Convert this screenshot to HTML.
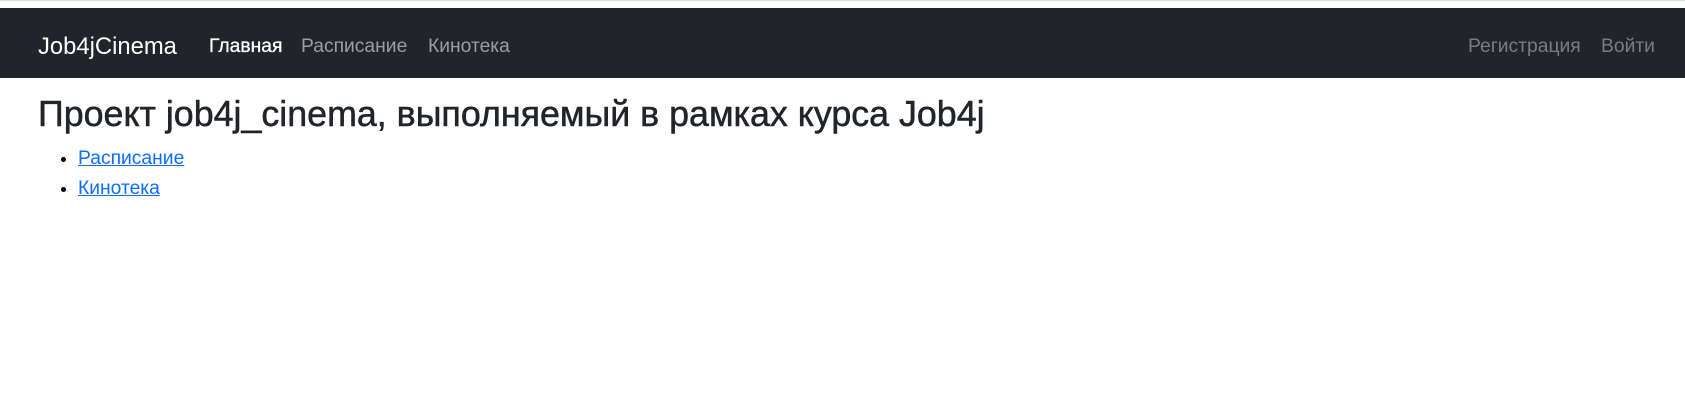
<!DOCTYPE html>
<html><head><meta charset="utf-8"><style>
body{margin:0;background:#fff;font-family:"Liberation Sans",sans-serif;width:1685px;height:413px;overflow:hidden}
.top{height:8px;background:#fff;border-top:1px solid #ddd;box-sizing:border-box}
nav{position:absolute;top:8px;left:0;width:1685px;height:70px;background:#212529}
nav span{position:absolute;top:26px;font-size:19.3px;line-height:26px;white-space:nowrap}
.brand{left:38px;color:#fff;font-size:23.8px!important;top:24px!important;line-height:30px!important}
.g{color:rgba(255,255,255,.55)}
.d{color:rgba(255,255,255,.4)}
h1{position:absolute;left:38px;top:92px;margin:0;font-size:35.8px;font-weight:normal;-webkit-text-stroke:0.5px #212529;color:#212529;line-height:44px;white-space:nowrap}
ul{position:absolute;left:38px;top:144px;margin:0;padding-left:40px;font-size:19.3px;line-height:30px}
a{color:#0d6efd}
</style></head><body>
<div class="top"></div>
<nav>
<span class="brand">Job4jCinema</span>
<span style="left:209px;color:#fff;-webkit-text-stroke:0.3px #fff">Главная</span>
<span class="g" style="left:301px">Расписание</span>
<span class="g" style="left:428px">Кинотека</span>
<span class="d" style="left:1468px">Регистрация</span>
<span class="d" style="left:1601px">Войти</span>
</nav>
<h1>Проект job4j_cinema, выполняемый в рамках курса Job4j</h1>
<ul><li><a href="#">Расписание</a></li><li><a href="#">Кинотека</a></li></ul>
</body></html>
